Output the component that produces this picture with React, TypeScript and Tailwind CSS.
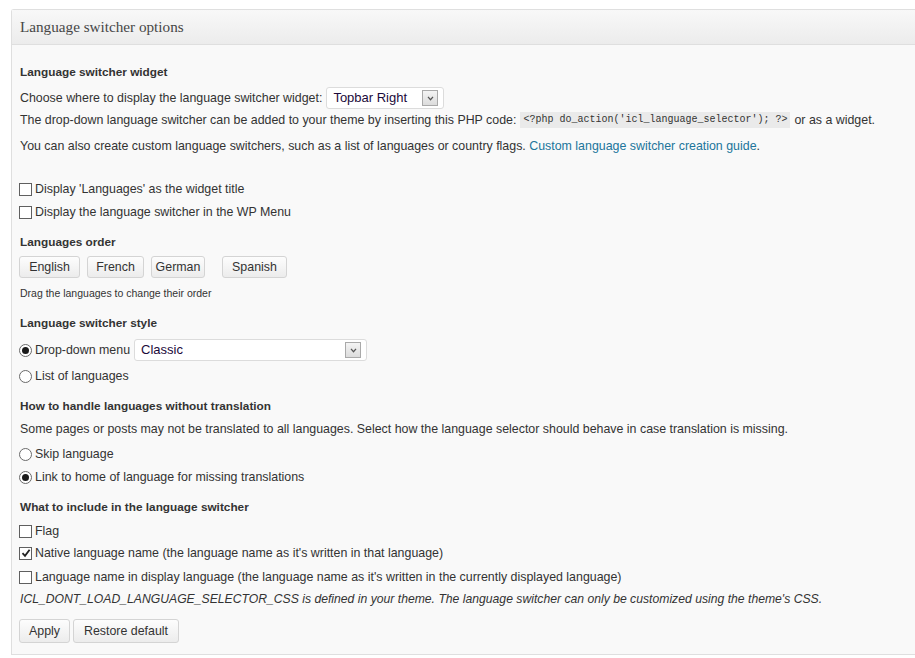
import React from 'react';

const sans = "font-['Liberation_Sans',Arial,sans-serif]";

function Checkbox({ checked = false }: { checked?: boolean }) {
    return (
        <span className="relative -ml-[1px] inline-flex h-[13px] w-[13px] shrink-0 items-center justify-center border border-[#5f5f5f] bg-white mr-[3px]">
            {checked && (
                <svg viewBox="0 0 10 10" className="h-[10px] w-[10px]">
                    <path d="M1.5 5.2 L4 7.8 L8.6 1.8" fill="none" stroke="#222" strokeWidth="1.8" />
                </svg>
            )}
        </span>
    );
}

function Radio({ checked = false }: { checked?: boolean }) {
    return (
        <span className="-ml-[1px] inline-flex h-[13px] w-[13px] shrink-0 items-center justify-center rounded-full border border-[#6a6a6a] bg-white mr-[3px]">
            {checked && <span className="h-[7px] w-[7px] rounded-full bg-[#1a1a1a]" />}
        </span>
    );
}

function Select({ value, width }: { value: string; width: string }) {
    return (
        <span className={`inline-flex h-[22px] items-center justify-between rounded-[3px] border border-[#dcdcdc] bg-white pl-[6px] pr-[5px] text-[13px] text-[#1b0a3a] ${width}`}>
            <span>{value}</span>
            <span className="flex h-[16px] w-[16px] items-center justify-center border border-[#a9a9a9] bg-gradient-to-b from-[#f4f4f4] to-[#dcdcdc]">
                <svg viewBox="0 0 8 6" className="h-[5px] w-[7px]">
                    <path d="M1 1 L4 4.5 L7 1" fill="none" stroke="#555" strokeWidth="1.5" />
                </svg>
            </span>
        </span>
    );
}

function Btn({ children, className = '' }: { children: React.ReactNode; className?: string }) {
    return (
        <button className={`inline-flex h-[22px] items-center justify-center whitespace-nowrap rounded-[3px] border border-[#d4d4d4] bg-gradient-to-b from-[#fdfdfd] to-[#ececec] text-[#333] ${className}`}>
            {children}
        </button>
    );
}

const row = 'flex h-[22px] items-center whitespace-nowrap';
const heading = 'flex h-[22px] items-center text-[11.8px] font-bold';

export default function App() {
    return (
        <div className={`min-h-[658px] bg-white pl-[11px] pt-[9px] ${sans} text-[12.4px] text-[#333]`}>
            <div className="rounded-tl-[3px] border border-r-0 border-[#dfdfdf] bg-[#f9f9f9]">
                <div className="flex h-[35px] items-center border-b border-[#dfdfdf] bg-gradient-to-b from-[#f8f8f8] to-[#ececec] pl-[8px] font-['Liberation_Serif',Georgia,serif] text-[15.2px] text-[#464646]">
                    Language switcher options
                </div>

                <div className="pl-[8px] pb-[11px]">
                    <div className={`${heading} mt-[17px]`}>Language switcher widget</div>
                    <div className={`${row} mt-[3px]`}>
                        <span className="mr-[4px]">Choose where to display the language switcher widget:</span>
                        <Select value="Topbar Right" width="w-[118px]" />
                    </div>
                    <div className={row}>
                        The drop-down language switcher can be added to your theme by inserting this PHP code:
                        <code className="mx-[4px] bg-[#eaeaea] px-[3px] py-[2px] font-['Liberation_Mono',Consolas,monospace] text-[10px] leading-[12px] text-[#333]">
                            {"<?php do_action('icl_language_selector'); ?>"}
                        </code>
                        or as a widget.
                    </div>
                    <div className={`${row} mt-[4px]`}>
                        You can also create custom language switchers, such as a list of languages or country flags.&nbsp;
                        <a className="text-[#21759b]">Custom language switcher creation guide</a>.
                    </div>

                    <label className={`${row} mt-[21px]`}>
                        <Checkbox />
                        Display 'Languages' as the widget title
                    </label>
                    <label className={`${row} mt-[1px]`}>
                        <Checkbox />
                        Display the language switcher in the WP Menu
                    </label>

                    <div className={`${heading} mt-[9px]`}>Languages order</div>
                    <div className="mt-[2px] flex">
                        <Btn className="-ml-[1px] w-[61px]">English</Btn>
                        <Btn className="ml-[7px] w-[57px]">French</Btn>
                        <Btn className="ml-[7px] w-[54px]">German</Btn>
                        <Btn className="ml-[17px] w-[65px]">Spanish</Btn>
                    </div>
                    <div className="mt-[7px] flex h-[18px] items-center text-[10.5px]">Drag the languages to change their order</div>

                    <div className={`${heading} mt-[10px]`}>Language switcher style</div>
                    <label className={`${row} mt-[4px]`}>
                        <Radio checked />
                        <span className="mr-[4px]">Drop-down menu</span>
                        <Select value="Classic" width="w-[233px]" />
                    </label>
                    <label className={`${row} mt-[4px]`}>
                        <Radio />
                        List of languages
                    </label>

                    <div className={`${heading} mt-[9px] h-[21px]`}>How to handle languages without translation</div>
                    <div className={row}>
                        Some pages or posts may not be translated to all languages. Select how the language selector should behave in case translation is missing.
                    </div>
                    <label className={`${row} mt-[3px]`}>
                        <Radio />
                        Skip language
                    </label>
                    <label className={`${row} mt-[1px]`}>
                        <Radio checked />
                        Link to home of language for missing translations
                    </label>

                    <div className={`${heading} mt-[9px]`}>What to include in the language switcher</div>
                    <label className={`${row} mt-[1px]`}>
                        <Checkbox />
                        Flag
                    </label>
                    <label className={row}>
                        <Checkbox checked />
                        Native language name (the language name as it's written in that language)
                    </label>
                    <label className={`${row} mt-[2px]`}>
                        <Checkbox />
                        Language name in display language (the language name as it's written in the currently displayed language)
                    </label>
                    <div className={`${row} text-[12.2px] italic`}>
                        ICL_DONT_LOAD_LANGUAGE_SELECTOR_CSS is defined in your theme. The language switcher can only be customized using the theme's CSS.
                    </div>

                    <div className="mt-[9px] flex">
                        <Btn className="-ml-[1px] h-[24px] w-[51px]">Apply</Btn>
                        <Btn className="ml-[3px] h-[24px] w-[106px]">Restore default</Btn>
                    </div>
                </div>
            </div>
        </div>
    );
}
